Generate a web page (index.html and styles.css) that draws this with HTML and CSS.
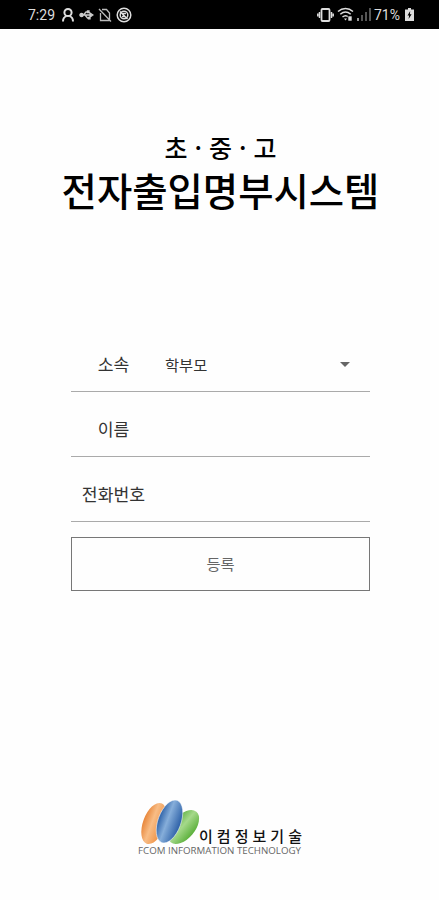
FILE: index.html
```html
<!DOCTYPE html>
<html lang="ko">
<head>
    <meta charset="UTF-8">
    <meta name="viewport" content="width=device-width, initial-scale=1.0">
    <title>전자출입명부시스템</title>
    <link rel="stylesheet" href="styles.css">
</head>
<body>
    <div class="status-bar">
        <div class="status-left">
            <span class="time">7:29</span>
            <svg class="icon-person" width="14" height="15" viewBox="0 0 14 15" fill="none" stroke="#ddd" stroke-width="2">
                <circle cx="7" cy="5.500" r="3.600"/>
                <path d="M2 14.500c0-3 1.200-4.700 3.500-5.400M12 14.500c0-3-1.200-4.700-3.500-5.400"/>
            </svg>
            <svg class="icon-usb" width="15" height="12" viewBox="0 0 15 12" fill="none" stroke="#ccc" stroke-width="1.300">
                <path d="M2 6h10M4.500 6l2.500-3h2M6 6l2.500 3h2"/>
                <circle cx="2.500" cy="6" r="1.600" fill="#ccc"/>
                <path d="M11 4l3 2-3 2zM8.500 2h1.500v1.500H8.500zM9.500 8.300H11v1.500H9.500z" fill="#ccc"/>
            </svg>
            <svg class="icon-nosim" width="14" height="14" viewBox="0 0 14 14" fill="none" stroke="#bbb" stroke-width="1.300">
                <path d="M4 1.500h4.500L11.500 5v7.500H2.500V5M1 1l12 12.500"/>
            </svg>
            <svg class="icon-block" width="16" height="16" viewBox="0 0 16 16" fill="none" stroke="#ddd" stroke-width="1.500">
                <circle cx="8" cy="8" r="6.800"/>
                <circle cx="8" cy="8" r="3.800"/>
                <path d="M4 4.500l7.500 7.500M6.500 6.500h3.500M6 9.500h3"/>
            </svg>
        </div>
        <div class="status-right">
            <svg class="icon-vibrate" width="17" height="14" viewBox="0 0 17 14" fill="none" stroke="#ddd">
                <rect x="4.500" y="1" width="8" height="12" rx="1" stroke-width="1.800"/>
                <path d="M2.500 4v6M14.500 4v6M.8 5.500v3M16.200 5.500v3" stroke-width="1.500"/>
            </svg>
            <svg class="icon-wifi" width="17" height="15" viewBox="0 0 17 15" fill="none" stroke="#ddd" stroke-width="1.500">
                <path d="M1 4.500c4.500-4 10.500-4 15 0M3.300 7.300c3.200-2.800 7.200-2.800 10.400 0M5.500 10c1.800-1.600 4.200-1.600 6 0"/>
                <path d="M7 11.500h3L8.500 13.500z" fill="#ddd" stroke="none"/>
                <path d="M11 9h4v5h-4z" fill="#ddd" stroke="#000" stroke-width=".6"/>
            </svg>
            <svg class="icon-signal" width="14" height="13" viewBox="0 0 14 13">
                <path d="M0 10h2v3H0z" fill="#999"/>
                <path d="M4 7h2v6H4zM8 4h2v9H8zM12 0h2v13h-2z" fill="#555"/>
            </svg>
            <span class="percent">71%</span>
            <svg class="icon-battery" width="9" height="13" viewBox="0 0 9 13">
                <path d="M3 0h3v1.500h3V13H0V1.500h3z" fill="#ddd"/>
                <path d="M5.200 3L2.500 7.500h1.600L3.600 11l3-4.700H4.900z" fill="#000"/>
            </svg>
        </div>
    </div>

    <div class="container">
        <h1 class="title">
            <span class="title-small">초 · 중 · 고</span>
            <span class="title-big">전자출입명부시스템</span>
        </h1>

        <form class="form">
            <div class="row">
                <label class="label">소속</label>
                <div class="select">
                    <span>학부모</span>
                    <span class="arrow"></span>
                </div>
            </div>
            <div class="row">
                <label class="label">이름</label>
            </div>
            <div class="row">
                <label class="label">전화번호</label>
            </div>
            <button type="button" class="submit">등록</button>
        </form>

        <div class="logo">
            <svg class="logo-svg" width="174" height="62" viewBox="134 797 174 62">
                <defs>
                    <linearGradient id="orange" x1="0" y1="0" x2="1" y2="0">
                        <stop offset="0" stop-color="#e8863a"/>
                        <stop offset=".4" stop-color="#f8bd86"/>
                        <stop offset="1" stop-color="#ee8c3c"/>
                    </linearGradient>
                    <linearGradient id="blue" x1="0" y1="0" x2="1" y2="0">
                        <stop offset="0" stop-color="#2e62a8"/>
                        <stop offset=".4" stop-color="#86aeda"/>
                        <stop offset="1" stop-color="#2b5fa6"/>
                    </linearGradient>
                    <linearGradient id="green" x1="0" y1="0" x2="1" y2="0">
                        <stop offset="0" stop-color="#62b246"/>
                        <stop offset=".45" stop-color="#a5d98a"/>
                        <stop offset="1" stop-color="#5cb03c"/>
                    </linearGradient>
                </defs>
                <ellipse cx="154" cy="823.500" rx="11" ry="21.500" transform="rotate(20 154 823.500)" fill="url(#orange)"/>
                <ellipse cx="183.500" cy="827" rx="11.500" ry="20" transform="rotate(40 183.500 827)" fill="url(#green)"/>
                <ellipse cx="169.500" cy="821.500" rx="11.500" ry="22.500" transform="rotate(20 169.500 821.500)" fill="url(#blue)" stroke="#fff" stroke-width=".5"/>
                <text class="logo-name" x="199" y="841.500" textLength="103">이컴정보기술</text>
                <text class="logo-sub" x="138" y="854" textLength="163" lengthAdjust="spacingAndGlyphs">FCOM INFORMATION TECHNOLOGY</text>
            </svg>
        </div>
    </div>
</body>
</html>
```
FILE: styles.css
```css
* {
    box-sizing: border-box;
}

html, body {
    height: 100%;
    margin: 0;
    background: #fefefe;
    overflow: hidden;
}

body {
    display: flex;
    flex-direction: column;
    font-family: "Noto Sans CJK KR", sans-serif;
    color: #333;
}

.status-bar {
    display: flex;
    justify-content: space-between;
    flex: none;
    height: 29px;
    padding: 0 25px 0 28px;
    background: #000;
    color: #ddd;
    font-family: Roboto, sans-serif;
    font-size: 14px;
}

.status-left, .status-right {
    display: flex;
    align-items: center;
}

.status-left {
    gap: 4px;
}

.status-right {
    gap: 3px;
}

.time {
    width: 29px;
}

.percent {
    width: 28px;
}

.container {
    flex: 1;
    display: flex;
    flex-direction: column;
    align-items: center;
    padding-left: 2px;
}

.title {
    display: flex;
    flex-direction: column;
    align-items: center;
    margin: 101px 0 0;
    color: #000;
    font-weight: 500;
}

.title-small {
    font-size: 25px;
    line-height: 34px;
}

.title-big {
    font-size: 38.400px;
    line-height: 50px;
}

.form {
    width: 299px;
    margin-top: 124px;
}

.row {
    display: flex;
    align-items: center;
    height: 65px;
    padding-top: 9px;
    border-bottom: 1px solid #aaa;
}

.row:first-child {
    height: 54px;
    padding-top: 0;
}

.label {
    width: 85px;
    text-align: center;
    font-size: 17.200px;
}

.row:first-child .label, .select span:first-child {
    margin-top: -2px;
}

.select {
    flex: 1;
    display: flex;
    align-items: center;
    justify-content: space-between;
    padding: 0 20px 0 9px;
    font-size: 15.300px;
}

.arrow {
    border: 5px solid transparent;
    border-top-color: #666;
    border-bottom: 0;
}

.submit {
    display: block;
    width: 100%;
    height: 54px;
    margin-top: 15px;
    padding: 0 0 2px;
    border: 1px solid #777;
    background: transparent;
    color: #666;
    font-family: inherit;
    font-size: 15.300px;
}

.logo {
    margin: auto 0 41px;
}

.logo-svg {
    display: block;
}

.logo-name {
    font-size: 15px;
    font-weight: 500;
    fill: #111;
}

.logo-sub {
    font-family: "Open Sans", sans-serif;
    font-size: 9.500px;
    fill: #666;
}
```
